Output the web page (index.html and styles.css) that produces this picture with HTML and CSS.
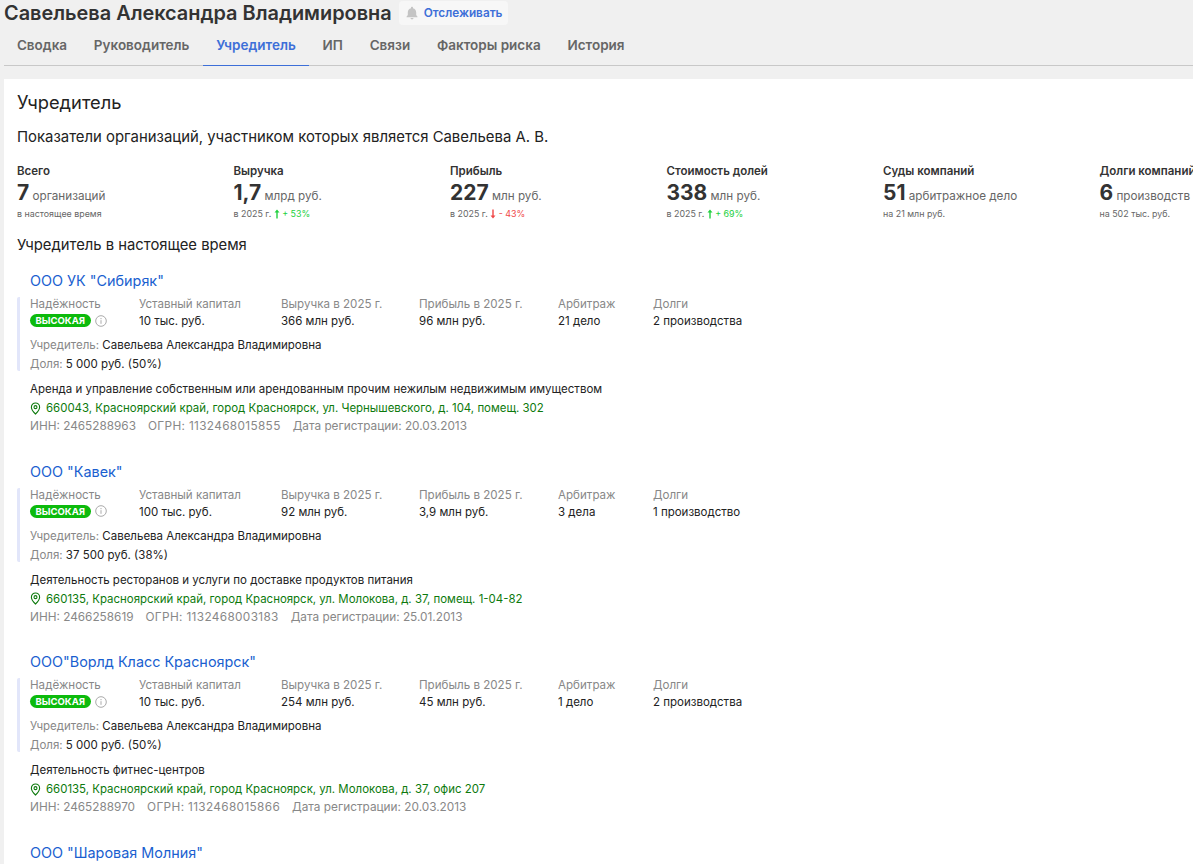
FILE: index.html
```html
<!DOCTYPE html>
<html lang="ru">
<head>
    <meta charset="UTF-8">
    <title>Савельева Александра Владимировна</title>
    <link rel="stylesheet" href="styles.css">
</head>
<body>
    <header class="head">
        <div class="title-row">
            <h1>Савельева Александра Владимировна</h1>
            <a class="track"><svg class="bell" viewBox="0 0 14 14"><path d="M7 0.8c.6 0 1 .4 1 1v.4c2 .5 3.200 2.200 3.200 4.300v2.500l1.300 1.700v.6h-11v-.6l1.300-1.700V6.500c0-2.100 1.200-3.800 3.200-4.300v-.4c0-.6.4-1 1-1z"/><path d="M5.500 12h3c0 .8-.7 1.400-1.500 1.400s-1.500-.6-1.500-1.400z"/></svg>Отслеживать</a>
        </div>
        <nav class="tabs">
            <a>Сводка</a>
            <a>Руководитель</a>
            <a class="active">Учредитель</a>
            <a>ИП</a>
            <a>Связи</a>
            <a>Факторы риска</a>
            <a>История</a>
        </nav>
    </header>

    <main class="card">
        <h2>Учредитель</h2>
        <p class="lead">Показатели организаций, участником которых является Савельева А. В.</p>

        <div class="stats">
            <div class="stat">
                <div class="stat-name">Всего</div>
                <div class="stat-value"><b>7</b> организаций</div>
                <div class="stat-note">в настоящее время</div>
            </div>
            <div class="stat">
                <div class="stat-name">Выручка</div>
                <div class="stat-value"><b>1,7</b> млрд руб.</div>
                <div class="stat-note">в 2025 г. <span class="up"><svg class="arrow" viewBox="0 0 6 10"><path d="M3 0.500L5.500 3.500H3.700V9.500H2.300V3.500H.5z"/></svg> + 53%</span></div>
            </div>
            <div class="stat">
                <div class="stat-name">Прибыль</div>
                <div class="stat-value"><b>227</b> млн руб.</div>
                <div class="stat-note">в 2025 г. <span class="down"><svg class="arrow" viewBox="0 0 6 10"><path d="M3 9.500L.5 6.500H2.300V.5H3.700V6.500H5.500z"/></svg> - 43%</span></div>
            </div>
            <div class="stat">
                <div class="stat-name">Стоимость долей</div>
                <div class="stat-value"><b>338</b> млн руб.</div>
                <div class="stat-note">в 2025 г. <span class="up"><svg class="arrow" viewBox="0 0 6 10"><path d="M3 0.500L5.500 3.500H3.700V9.500H2.300V3.500H.5z"/></svg> + 69%</span></div>
            </div>
            <div class="stat">
                <div class="stat-name">Суды компаний</div>
                <div class="stat-value"><b>51</b> арбитражное дело</div>
                <div class="stat-note">на 21 млн руб.</div>
            </div>
            <div class="stat">
                <div class="stat-name">Долги компаний</div>
                <div class="stat-value"><b>6</b> производств</div>
                <div class="stat-note">на 502 тыс. руб.</div>
            </div>
        </div>

        <h3>Учредитель в настоящее время</h3>

        <section class="company">
            <a class="company-name">ООО УК "Сибиряк"</a>
            <div class="company-box">
                <div class="facts">
                    <div class="fact f1"><span>Надёжность</span><div class="rating"><i class="badge">ВЫСОКАЯ</i><svg class="info" viewBox="0 0 12 12"><circle cx="6" cy="6" r="5.300"/><path d="M6 5.200v3.600M6 3v1.200"/></svg></div></div>
                    <div class="fact f2"><span>Уставный капитал</span><div>10 тыс. руб.</div></div>
                    <div class="fact f3"><span>Выручка в 2025 г.</span><div>366 млн руб.</div></div>
                    <div class="fact f4"><span>Прибыль в 2025 г.</span><div>96 млн руб.</div></div>
                    <div class="fact f5"><span>Арбитраж</span><div>21 дело</div></div>
                    <div class="fact f6"><span>Долги</span><div>2 производства</div></div>
                </div>
                <div class="line founder"><span>Учредитель:</span> Савельева Александра Владимировна</div>
                <div class="line share"><span>Доля:</span> 5 000 руб. (50%)</div>
            </div>
            <div class="line activity">Аренда и управление собственным или арендованным прочим нежилым недвижимым имуществом</div>
            <div class="line address"><svg class="pin" viewBox="0 0 12 14"><path d="M6 1a4.500 4.500 0 0 1 4.500 4.500C10.500 8.500 6 13 6 13S1.500 8.500 1.500 5.500A4.500 4.500 0 0 1 6 1z"/><circle cx="6" cy="5.500" r="1.600"/></svg>660043, Красноярский край, город Красноярск, ул. Чернышевского, д. 104, помещ. 302</div>
            <div class="line reqs"><span>ИНН: 2465288963</span><span>ОГРН: 1132468015855</span><span>Дата регистрации: 20.03.2013</span></div>
        </section>

        <section class="company">
            <a class="company-name">ООО "Кавек"</a>
            <div class="company-box">
                <div class="facts">
                    <div class="fact f1"><span>Надёжность</span><div class="rating"><i class="badge">ВЫСОКАЯ</i><svg class="info" viewBox="0 0 12 12"><circle cx="6" cy="6" r="5.300"/><path d="M6 5.200v3.600M6 3v1.200"/></svg></div></div>
                    <div class="fact f2"><span>Уставный капитал</span><div>100 тыс. руб.</div></div>
                    <div class="fact f3"><span>Выручка в 2025 г.</span><div>92 млн руб.</div></div>
                    <div class="fact f4"><span>Прибыль в 2025 г.</span><div>3,9 млн руб.</div></div>
                    <div class="fact f5"><span>Арбитраж</span><div>3 дела</div></div>
                    <div class="fact f6"><span>Долги</span><div>1 производство</div></div>
                </div>
                <div class="line founder"><span>Учредитель:</span> Савельева Александра Владимировна</div>
                <div class="line share"><span>Доля:</span> 37 500 руб. (38%)</div>
            </div>
            <div class="line activity">Деятельность ресторанов и услуги по доставке продуктов питания</div>
            <div class="line address"><svg class="pin" viewBox="0 0 12 14"><path d="M6 1a4.500 4.500 0 0 1 4.500 4.500C10.500 8.500 6 13 6 13S1.500 8.500 1.500 5.500A4.500 4.500 0 0 1 6 1z"/><circle cx="6" cy="5.500" r="1.600"/></svg>660135, Красноярский край, город Красноярск, ул. Молокова, д. 37, помещ. 1-04-82</div>
            <div class="line reqs"><span>ИНН: 2466258619</span><span>ОГРН: 1132468003183</span><span>Дата регистрации: 25.01.2013</span></div>
        </section>

        <section class="company">
            <a class="company-name">ООО"Ворлд Класс Красноярск"</a>
            <div class="company-box">
                <div class="facts">
                    <div class="fact f1"><span>Надёжность</span><div class="rating"><i class="badge">ВЫСОКАЯ</i><svg class="info" viewBox="0 0 12 12"><circle cx="6" cy="6" r="5.300"/><path d="M6 5.200v3.600M6 3v1.200"/></svg></div></div>
                    <div class="fact f2"><span>Уставный капитал</span><div>10 тыс. руб.</div></div>
                    <div class="fact f3"><span>Выручка в 2025 г.</span><div>254 млн руб.</div></div>
                    <div class="fact f4"><span>Прибыль в 2025 г.</span><div>45 млн руб.</div></div>
                    <div class="fact f5"><span>Арбитраж</span><div>1 дело</div></div>
                    <div class="fact f6"><span>Долги</span><div>2 производства</div></div>
                </div>
                <div class="line founder"><span>Учредитель:</span> Савельева Александра Владимировна</div>
                <div class="line share"><span>Доля:</span> 5 000 руб. (50%)</div>
            </div>
            <div class="line activity">Деятельность фитнес-центров</div>
            <div class="line address"><svg class="pin" viewBox="0 0 12 14"><path d="M6 1a4.500 4.500 0 0 1 4.500 4.500C10.500 8.500 6 13 6 13S1.500 8.500 1.500 5.500A4.500 4.500 0 0 1 6 1z"/><circle cx="6" cy="5.500" r="1.600"/></svg>660135, Красноярский край, город Красноярск, ул. Молокова, д. 37, офис 207</div>
            <div class="line reqs"><span>ИНН: 2465288970</span><span>ОГРН: 1132468015866</span><span>Дата регистрации: 20.03.2013</span></div>
        </section>

        <section class="company">
            <a class="company-name">ООО "Шаровая Молния"</a>
        </section>
    </main>
</body>
</html>
```

FILE: styles.css
```css
html, body {
    height: 864px;
    overflow: hidden;
}
body {
    margin: 0;
    background-color: #f0f0f0;
    font-family: Inter, "Noto Sans", sans-serif;
    color: #222;
}
a {
    text-decoration: none;
}
.head {
    padding-left: 4px;
}
.title-row {
    display: flex;
    align-items: center;
    height: 25px;
}
h1 {
    margin: 0;
    font-size: 19.9px;
    font-weight: 600;
    color: #333;
    white-space: nowrap;
}
.track {
    display: flex;
    align-items: center;
    height: 24px;
    margin-left: 7px;
    padding: 0 6px;
    gap: 5px;
    background-color: #f7f7f7;
    border-radius: 4px;
    color: #3d6fd8;
    font-size: 11.8px;
    font-weight: 600;
}
.bell {
    width: 14px;
    height: 14px;
    fill: #c4c4c4;
}
.tabs {
    display: flex;
    height: 40px;
    margin-left: -0.5px;
    border-bottom: 1px solid #c8c8c8;
}
.tabs a {
    padding: 12px 13.4px 0;
    font-size: 13.5px;
    font-weight: 600;
    color: #666;
}
.tabs .active {
    color: #3d6fd8;
    border-bottom: 1px solid #3d6fd8;
    margin-bottom: -1px;
}
.card {
    margin: 13px 0 0 4px;
    padding: 12px 13px;
    background-color: #fff;
}
h2 {
    margin: 0;
    font-size: 18.3px;
    font-weight: 400;
    color: #222;
}
.lead {
    margin: 15px 0 0;
    font-size: 14.9px;
}
.stats {
    display: grid;
    grid-template-columns: repeat(6, 216.500px);
    margin-top: 18px;
    white-space: nowrap;
}
.stat-name {
    font-size: 11.500px;
    font-weight: 600;
    color: #333;
}
.stat-value {
    margin-top: 2px;
    font-size: 11.700px;
    color: #666;
}
.stat-value b {
    font-size: 21px;
    font-weight: 700;
    color: #333;
}
.stat-note {
    margin-top: 3px;
    font-size: 8.900px;
    color: #666;
}
.arrow {
    width: 6px;
    height: 10px;
    vertical-align: -2px;
}
.up {
    color: #22d040;
    fill: #22d040;
}
.down {
    color: #f04848;
    fill: #f04848;
}
h3 {
    margin: 17px 0 0;
    font-size: 14.800px;
    font-weight: 400;
}
.company {
    height: 190.500px;
    padding-top: 18px;
    box-sizing: border-box;
    font-size: 11.500px;
}
.company-name {
    display: block;
    margin-left: 13px;
    font-size: 14.400px;
    color: #1a5fd0;
}
.company-box {
    margin-top: 8px;
    padding-left: 10px;
    border-left: 3px solid #e2e6fa;
    border-radius: 2px;
}
.facts {
    display: flex;
}
.fact span {
    font-size: 11.600px;
    color: #888;
}
.fact div {
    margin-top: 3px;
    color: #222;
}
.f1 { width: 109px; }
.f2 { width: 142px; }
.f3 { width: 138px; }
.f4 { width: 139px; }
.f5 { width: 95px; }
.rating {
    display: flex;
    align-items: center;
    gap: 4px;
}
.badge {
    padding: 0 5.500px;
    background-color: #0cba0c;
    border-radius: 7px;
    color: #fff;
    font-size: 9.500px;
    font-style: normal;
    font-weight: 700;
    line-height: 13px;
}
.info {
    width: 12px;
    height: 12px;
    fill: none;
    stroke: #aaa;
}
.line {
    margin-left: 13px;
    white-space: nowrap;
}
.line span {
    color: #888;
}
.company-box .line {
    margin-left: 0;
}
.founder {
    margin-top: 10px;
}
.share {
    margin-top: 5px;
}
.activity {
    margin-top: 11px;
}
.address {
    display: flex;
    align-items: center;
    gap: 5px;
    margin-top: 5px;
    font-size: 11.450px;
    color: #0d7a0d;
}
.pin {
    width: 11px;
    height: 13px;
    fill: none;
    stroke: #0d7a0d;
    stroke-width: 1.200;
}
.reqs {
    display: flex;
    gap: 12px;
    margin-top: 4px;
    font-size: 11.800px;
}
.reqs span:nth-child(2) {
    letter-spacing: 0.35px;
}
```
